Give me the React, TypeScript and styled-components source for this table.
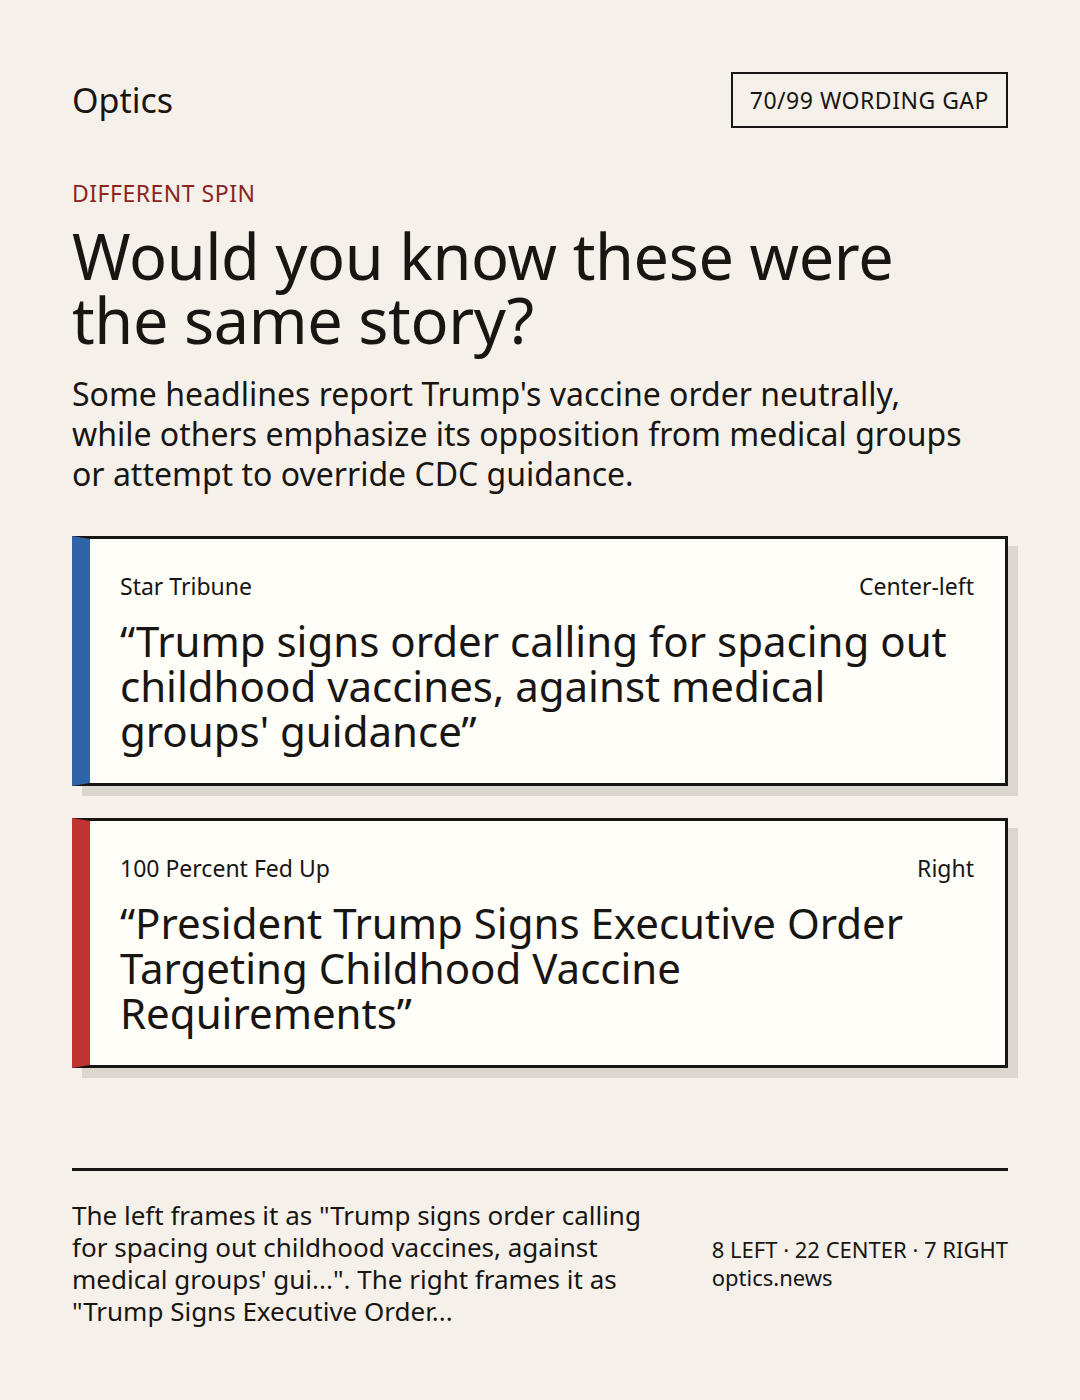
import React from "react";
import styled, { createGlobalStyle } from "styled-components";

const GlobalStyle = createGlobalStyle`
  html, body {
    margin: 0;
    padding: 0;
    background: #f5f1ea;
  }
  body {
    font-family: "Noto Sans", "Open Sans", sans-serif;
    color: #181512;
  }
`;

const Page = styled.div`
  width: 1080px;
  min-height: 1400px;
  box-sizing: border-box;
  padding: 72px 72px 0;
  background: #f5f1ea;
`;

const Header = styled.header`
  display: flex;
  justify-content: space-between;
  align-items: center;
`;

const Brand = styled.div`
  font-size: 34px;
  line-height: 56px;
`;

const GapBadge = styled.div`
  border: 2px solid #181512;
  padding: 0 17px;
  height: 56px;
  box-sizing: border-box;
  display: flex;
  align-items: center;
  font-size: 23px;
  letter-spacing: 0.5px;
`;

const Kicker = styled.div`
  margin-top: 50px;
  color: #8b2322;
  font-size: 23px;
  letter-spacing: 0.5px;
  line-height: 30px;
  text-transform: uppercase;
`;

const Title = styled.h1`
  margin: 16px 0 0;
  font-size: 63px;
  font-weight: 400;
  line-height: 64px;
  letter-spacing: -0.4px;
`;

const Lede = styled.p`
  margin: 22px 0 0;
  font-size: 32px;
  line-height: 40px;
  max-width: 900px;
`;

const Cards = styled.div`
  margin-top: 42px;
  display: flex;
  flex-direction: column;
  gap: 32px;
`;

const Card = styled.article<{ $lean: string }>`
  background: #fffdf8;
  border: 3px solid #181512;
  border-left: 18px solid ${(p) => p.$lean};
  box-shadow: 10px 10px 0 #dbd7cf;
  padding: 32px 31px 30px 30px;
  height: 250px;
  box-sizing: border-box;
`;

const CardMeta = styled.div`
  display: flex;
  justify-content: space-between;
  font-size: 23px;
  line-height: 30px;
`;

const Quote = styled.div`
  margin-top: 17px;
  font-size: 42px;
  line-height: 45px;
`;

const Divider = styled.hr`
  margin: 100px 0 0;
  border: 0;
  border-top: 3px solid #181512;
`;

const Footer = styled.footer`
  margin-top: 28px;
  display: flex;
  justify-content: space-between;
  align-items: center;
`;

const Summary = styled.p`
  margin: 0;
  width: 600px;
  font-size: 26px;
  line-height: 32px;
`;

const Stats = styled.div`
  font-size: 22px;
  line-height: 28px;
`;

const stories = [
  {
    outlet: "Star Tribune",
    lean: "Center-left",
    color: "#2f64a8",
    headline:
      "Trump signs order calling for spacing out childhood vaccines, against medical groups' guidance",
  },
  {
    outlet: "100 Percent Fed Up",
    lean: "Right",
    color: "#c03331",
    headline:
      "President Trump Signs Executive Order Targeting Childhood Vaccine Requirements",
  },
];

export default function App() {
  return (
    <>
      <GlobalStyle />
      <Page>
        <Header>
          <Brand>Optics</Brand>
          <GapBadge>70/99 WORDING GAP</GapBadge>
        </Header>
        <Kicker>Different spin</Kicker>
        <Title>
          Would you know these were
          <br />
          the same story?
        </Title>
        <Lede>
          Some headlines report Trump's vaccine order neutrally, while others
          emphasize its opposition from medical groups or attempt to override
          CDC guidance.
        </Lede>
        <Cards>
          {stories.map((s) => (
            <Card key={s.outlet} $lean={s.color}>
              <CardMeta>
                <span>{s.outlet}</span>
                <span>{s.lean}</span>
              </CardMeta>
              <Quote>“{s.headline}”</Quote>
            </Card>
          ))}
        </Cards>
        <Divider />
        <Footer>
          <Summary>
            The left frames it as "Trump signs order calling for spacing out
            childhood vaccines, against medical groups' gui...". The right
            frames it as "Trump Signs Executive Order...
          </Summary>
          <Stats>
            8 LEFT · 22 CENTER · 7 RIGHT
            <br />
            optics.news
          </Stats>
        </Footer>
      </Page>
    </>
  );
}
